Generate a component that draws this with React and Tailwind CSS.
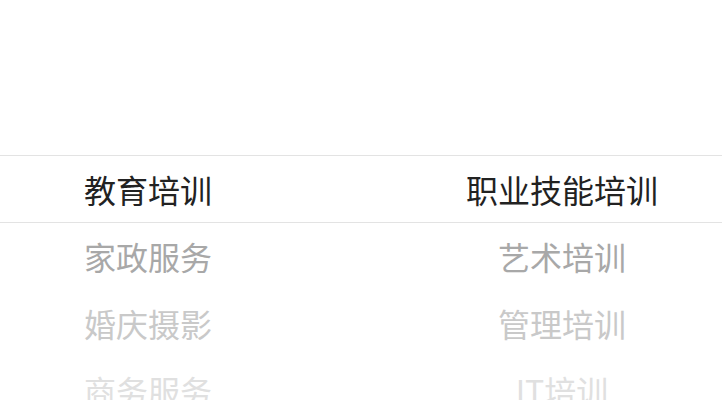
import React from 'react';

const LEFT = ['教育培训', '家政服务', '婚庆摄影', '商务服务'];
const RIGHT = ['职业技能培训', '艺术培训', '管理培训', 'IT培训'];
const TONES = ['text-[#222222]', 'text-[#a8a8a8]', 'text-[#c9c9c9]', 'text-[#e0e0e0]'];

function Column({ items, className }) {
  return (
    <div className={`flex flex-col pt-[155px] ${className}`}>
      {items.map((t, i) => (
        <div key={t} className={`h-[67px] flex items-center justify-center text-[32px] leading-none ${TONES[i]}`}>
          {t}
        </div>
      ))}
    </div>
  );
}

export default function App() {
  return (
    <div
      className="relative w-[722px] h-[400px] overflow-hidden bg-white"
      style={{ fontFamily: '"Noto Sans CJK SC", "Noto Sans", sans-serif' }}
    >
      <div className="flex">
        <Column items={LEFT} className="w-[296px]" />
        <Column items={RIGHT} className="w-[320px] ml-auto" />
      </div>
      {/* selection indicator */}
      <div className="pointer-events-none absolute left-0 right-0 top-[155px] h-[68px] border-y border-[#e3e3e3]" />
    </div>
  );
}
